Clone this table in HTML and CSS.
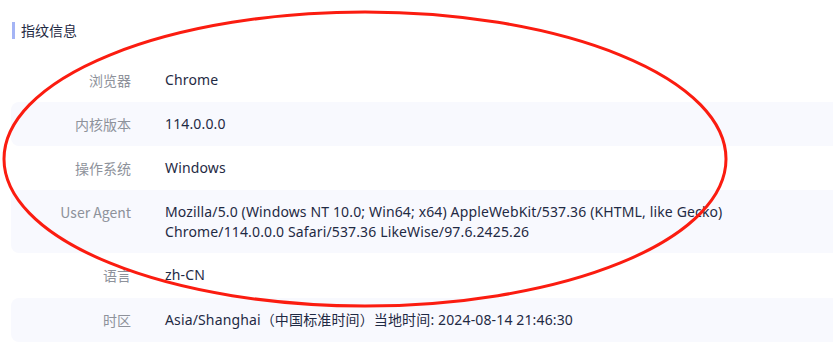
FILE: index.html
```html
<!DOCTYPE html>
<html lang="zh-CN">

<head>
  <meta charset="UTF-8" />
  <meta name="viewport" content="width=device-width, initial-scale=1.0" />
  <title>指纹信息</title>
  <link rel="stylesheet" href="styles.css">
</head>

<body>
  <div class="fingerprint">
    <h3 class="section-title">指纹信息</h3>

    <div class="info-list">
      <div class="info-row">
        <div class="info-label">浏览器</div>
        <div class="info-value">Chrome</div>
      </div>
      <div class="info-row">
        <div class="info-label">内核版本</div>
        <div class="info-value">114.0.0.0</div>
      </div>
      <div class="info-row">
        <div class="info-label">操作系统</div>
        <div class="info-value">Windows</div>
      </div>
      <div class="info-row">
        <div class="info-label">User Agent</div>
        <div class="info-value">Mozilla/5.0 (Windows NT 10.0; Win64; x64) AppleWebKit/537.36 (KHTML, like Gecko)<br>Chrome/114.0.0.0 Safari/537.36 LikeWise/97.6.2425.26</div>
      </div>
      <div class="info-row">
        <div class="info-label">语言</div>
        <div class="info-value">zh-CN</div>
      </div>
      <div class="info-row">
        <div class="info-label">时区</div>
        <div class="info-value">Asia/Shanghai（中国标准时间）当地时间: 2024-08-14 21:46:30</div>
      </div>
    </div>

    <!-- annotation drawn over the list -->
    <svg class="markup" width="833" height="356" viewBox="0 0 833 356">
      <ellipse cx="365" cy="159" rx="361" ry="147" fill="none" stroke="#fb1c10" stroke-width="3" />
    </svg>
  </div>
</body>

</html>
```

FILE: styles.css
```css
body {
  margin: 0;
  background-color: #ffffff;
  font-family: "Noto Sans", "Noto Sans CJK SC", sans-serif;
  font-size: 14px;
  color: #1f2a44;
}

.fingerprint {
  position: relative;
  padding: 22px 0 0 11px;
}

.section-title {
  margin: 0 0 0 1px;
  padding-left: 6px;
  border-left: 3px solid #a4b4f5;
  font-size: 14px;
  font-weight: 400;
  line-height: 17px;
  color: #1f2a44;
  font-family: "Noto Sans CJK SC", sans-serif;
}

.info-list {
  margin-top: 19px;
}

.info-row {
  display: flex;
  padding: 12px 0;
  line-height: 20px;
  border-radius: 8px 0 0 8px;
}

.info-row:nth-child(even) {
  background-color: #f8f9fe;
}

.info-row:nth-child(4) {
  padding: 12px 0 11px;
}

.info-row:nth-child(5) {
  padding-bottom: 13px;
}

.info-label {
  flex: 0 0 120px;
  text-align: right;
  color: #8e929b;
  font-family: "Noto Sans CJK SC", sans-serif;
}

.info-value {
  margin-left: 34px;
  letter-spacing: 0.14px;
  font-family: "Noto Sans", "Noto Sans CJK SC", sans-serif;
}

.markup {
  position: absolute;
  top: 0;
  left: 0;
  pointer-events: none;
}
```
